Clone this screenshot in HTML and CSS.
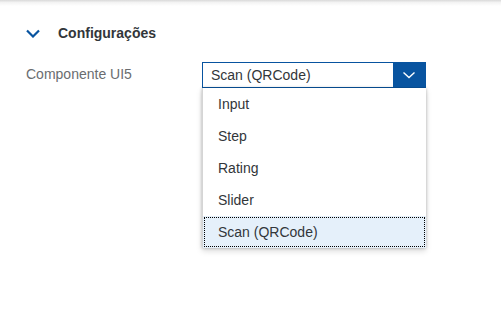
FILE: index.html
```html
<!DOCTYPE html>
<html>
<head>
<meta charset="utf-8">
<link rel="stylesheet" href="styles.css">
</head>
<body>
<div class="topshadow"></div>
<section class="panel">
  <div class="header">
    <svg class="chev" width="14" height="9" viewBox="0 0 14 9"><path d="M1 1.5 L7 7.5 L13 1.5" fill="none" stroke="#0854a0" stroke-width="2.2"/></svg>
    <span class="title">Configurações</span>
  </div>
  <div class="row">
    <label class="label">Componente UI5</label>
    <div class="combo">
      <div class="field">
        <span class="value">Scan (QRCode)</span>
        <span class="btn"><svg width="14" height="8" viewBox="0 0 14 8"><path d="M1.5 1.5 L7 6.5 L12.5 1.5" fill="none" stroke="#fff" stroke-width="1.4"/></svg></span>
      </div>
      <ul class="list">
        <li class="item">Input</li>
        <li class="item">Step</li>
        <li class="item">Rating</li>
        <li class="item">Slider</li>
        <li class="item selected">Scan (QRCode)</li>
      </ul>
    </div>
  </div>
</section>
</body>
</html>
```
FILE: styles.css
```css
html, body { margin: 0; padding: 0; background: #fff; }
body { font-family: "Liberation Sans", Arial, sans-serif; font-size: 14px; color: #32363a; width: 501px; height: 319px; overflow: hidden; position: relative; }
.topshadow { height: 6px; background: linear-gradient(#d9d9d9, #f3f3f3 40%, #fff); }
.panel { padding: 0 0 0 26px; }
.header { display: flex; align-items: center; height: 22px; margin-top: 16px; }
.chev { margin-right: 18px; }
.title { font-weight: bold; font-size: 14px; color: #32363a; }
.row { display: flex; margin-top: 18px; }
.label { color: #6a6d70; width: 176px; padding-top: 4px; }
.combo { width: 224px; }
.field { display: flex; height: 26px; box-sizing: border-box; border: 1px solid #0854a0; background: #fff; }
.value { flex: 1; padding-left: 8px; line-height: 24px; }
.btn { width: 32px; background: #0854a0; display: flex; align-items: center; justify-content: center; }
.list { list-style: none; margin: 0; padding: 0; background: #fff; box-shadow: 0 0 3px rgba(0,0,0,0.25), 0 3px 6px rgba(0,0,0,0.15); border-left: 1px solid #d5d5d5; }
.item { height: 32px; line-height: 32px; padding-left: 15px; }
.selected { background: #e5f0fa; outline: 1px dotted #000; outline-offset: -2px; }
```
